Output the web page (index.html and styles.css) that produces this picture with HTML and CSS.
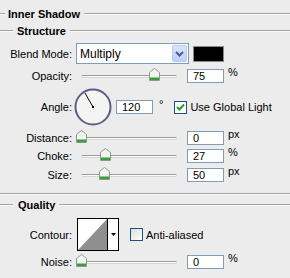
FILE: index.html
```html
<!DOCTYPE html>
<html lang="en">
<head>
  <meta charset="UTF-8">
  <title>Inner Shadow</title>
  <link rel="stylesheet" href="styles.css">
</head>
<body>

  <div class="legend legend-top">Inner Shadow</div>
  <div class="legend legend-sub">Structure</div>

  <!-- Blend mode -->
  <div class="row row-blend">
    <span class="lbl">Blend Mode:</span>
    <div class="select">
      <span class="select-text">Multiply</span>
      <span class="select-btn">
        <svg width="9" height="6" viewBox="0 0 9 6"><path d="M1 1 L4.5 4.5 L8 1" fill="none" stroke="#4d6185" stroke-width="2"/></svg>
      </span>
    </div>
    <div class="swatch"></div>
  </div>

  <!-- Opacity -->
  <div class="row row-field">
    <span class="lbl">Opacity:</span>
    <div class="slider">
      <div class="track"></div>
      <svg class="thumb" style="left: 73px" width="11" height="13" viewBox="0 0 11 13"><path d="M0.5 5 Q0.5 4 1.5 3.5 L5.5 0.5 L9.5 3.5 Q10.5 4 10.5 5 L10.5 12.5 L0.5 12.5 Z" fill="#f3f3f0" stroke="#8c9a8c"/><rect x="1" y="9.5" width="9" height="2.5" fill="#3c9c3c"/></svg>
    </div>
    <div class="input">75</div>
    <span class="unit">%</span>
  </div>

  <!-- Angle -->
  <div class="row row-angle">
    <span class="lbl">Angle:</span>
    <svg class="dial" width="38" height="38" viewBox="0 0 38 38">
      <circle cx="19" cy="19" r="17.5" fill="#f4f4f2" stroke="#5b5f86" stroke-width="2"/>
      <line x1="19" y1="19" x2="11" y2="5" stroke="#000" stroke-width="1"/>
      <rect x="18" y="18" width="2" height="2" fill="#000"/>
    </svg>
    <div class="input input-angle">120</div>
    <span class="unit unit-deg">°</span>
    <span class="check checked">
      <svg width="11" height="11" viewBox="0 0 11 11"><path d="M2 5 L4.5 7.5 L9 2.5" fill="none" stroke="#21a121" stroke-width="2"/></svg>
    </span>
    <span class="check-text">Use Global Light</span>
  </div>

  <!-- Distance / Choke / Size -->
  <div class="row row-field row-distance">
    <span class="lbl">Distance:</span>
    <div class="slider">
      <div class="track"></div>
      <svg class="thumb" style="left: 0px" width="11" height="13" viewBox="0 0 11 13"><path d="M0.5 5 Q0.5 4 1.5 3.5 L5.5 0.5 L9.5 3.5 Q10.5 4 10.5 5 L10.5 12.5 L0.5 12.5 Z" fill="#f3f3f0" stroke="#8c9a8c"/><rect x="1" y="9.5" width="9" height="2.5" fill="#3c9c3c"/></svg>
    </div>
    <div class="input">0</div>
    <span class="unit">px</span>
  </div>

  <div class="row row-field row-choke">
    <span class="lbl">Choke:</span>
    <div class="slider">
      <div class="track"></div>
      <svg class="thumb" style="left: 24px" width="11" height="13" viewBox="0 0 11 13"><path d="M0.5 5 Q0.5 4 1.5 3.5 L5.5 0.5 L9.5 3.5 Q10.5 4 10.5 5 L10.5 12.5 L0.5 12.5 Z" fill="#f3f3f0" stroke="#8c9a8c"/><rect x="1" y="9.5" width="9" height="2.5" fill="#3c9c3c"/></svg>
    </div>
    <div class="input">27</div>
    <span class="unit">%</span>
  </div>

  <div class="row row-field row-size">
    <span class="lbl">Size:</span>
    <div class="slider">
      <div class="track"></div>
      <svg class="thumb" style="left: 23px" width="11" height="13" viewBox="0 0 11 13"><path d="M0.5 5 Q0.5 4 1.5 3.5 L5.5 0.5 L9.5 3.5 Q10.5 4 10.5 5 L10.5 12.5 L0.5 12.5 Z" fill="#f3f3f0" stroke="#8c9a8c"/><rect x="1" y="9.5" width="9" height="2.5" fill="#3c9c3c"/></svg>
    </div>
    <div class="input">50</div>
    <span class="unit">px</span>
  </div>

  <div class="separator"></div>

  <div class="legend legend-sub legend-quality">Quality</div>

  <!-- Contour -->
  <div class="row row-contour">
    <span class="lbl">Contour:</span>
    <div class="contour">
      <svg class="contour-preview" width="29" height="31" viewBox="0 0 29 31"><path d="M0 31 L29 0 L29 31 Z" fill="#8f8f8f"/></svg>
      <span class="contour-btn">
        <svg width="5" height="3" viewBox="0 0 5 3"><path d="M0 0 L5 0 L2.5 3 Z" fill="#000"/></svg>
      </span>
    </div>
    <span class="check"></span>
    <span class="check-text">Anti-aliased</span>
  </div>

  <!-- Noise -->
  <div class="row row-field row-noise">
    <span class="lbl">Noise:</span>
    <div class="slider">
      <div class="track"></div>
      <svg class="thumb" style="left: 0px" width="11" height="13" viewBox="0 0 11 13"><path d="M0.5 5 Q0.5 4 1.5 3.5 L5.5 0.5 L9.5 3.5 Q10.5 4 10.5 5 L10.5 12.5 L0.5 12.5 Z" fill="#f3f3f0" stroke="#8c9a8c"/><rect x="1" y="9.5" width="9" height="2.5" fill="#3c9c3c"/></svg>
    </div>
    <div class="input">0</div>
    <span class="unit">%</span>
  </div>

</body>
</html>
```

FILE: styles.css
```css
body {
  margin: 0;
  padding: 6px 0 0;
  background: #ececec;
  font-family: "Liberation Sans", Arial, sans-serif;
  font-size: 11px;
  color: #000;
  width: 290px;
  height: 278px;
  overflow: hidden;
}

/* Group titles with etched lines */
.legend {
  display: flex;
  align-items: center;
  height: 16px;
  font-weight: bold;
}

.legend::before,
.legend::after {
  content: "";
  height: 0;
  border-top: 1px solid #a2a2a2;
  border-bottom: 1px solid #fbfbfb;
}

.legend::after {
  flex: 1;
  margin-left: 4px;
}

.legend-top::before {
  width: 5px;
  margin-right: 3px;
}

.legend-sub {
  margin-top: 1px;
}

.legend-sub::before {
  width: 13px;
  margin-right: 4px;
}

.legend-quality {
  margin-top: 2px;
}

.legend-quality::before {
  margin-right: 5px;
}

.separator {
  margin-top: 11px;
  height: 0;
  border-top: 1px solid #a2a2a2;
  border-bottom: 1px solid #fbfbfb;
}

/* Rows */
.row {
  display: flex;
  align-items: center;
}

.lbl {
  width: 72px;
  text-align: right;
  flex: none;
}

.row-blend {
  margin-top: 4px;
  height: 21px;
}

.row-field {
  margin-top: 5px;
  height: 14px;
}

.row-choke {
  margin-top: 4px;
}

.row-noise {
  margin-top: 4px;
}

/* Blend select */
.select {
  margin-left: 4px;
  width: 113px;
  height: 21px;
  box-sizing: border-box;
  border: 1px solid #7f9db9;
  background: #fff;
  display: flex;
  align-items: center;
  padding: 1px;
}

.select-text {
  flex: 1;
  padding-left: 2px;
  font-size: 12px;
}

.select-btn {
  width: 15px;
  height: 17px;
  box-sizing: border-box;
  border: 1px solid #b9c9ef;
  border-radius: 2px;
  background: linear-gradient(#d9e4fd, #bccff9);
  display: flex;
  align-items: center;
  justify-content: center;
}

.swatch {
  margin-left: 4px;
  width: 31px;
  height: 16px;
  box-sizing: border-box;
  border: 1px solid #8a8a8a;
  background: #000;
}

/* Sliders */
.slider {
  position: relative;
  margin-left: 4px;
  width: 106px;
  height: 14px;
  display: flex;
  align-items: center;
}

.track {
  margin: 1px 5px 0;
  flex: 1;
  height: 1px;
  border-top: 1px solid #9c9c9c;
  border-bottom: 1px solid #d9d5c9;
  background: #fbfbfb;
  border-radius: 2px;
}

.thumb {
  position: absolute;
  top: -1px;
}

.input {
  margin-left: 5px;
  width: 37px;
  height: 14px;
  box-sizing: border-box;
  border: 1px solid #7f9db9;
  background: #fff;
  padding-left: 5px;
  line-height: 12px;
  font-size: 11px;
}

.unit {
  margin-left: 4px;
  align-self: flex-start;
  margin-top: -3px;
}

/* Angle */
.row-angle {
  margin-top: 5px;
  height: 38px;
}

.dial {
  margin-left: 2px;
}

.input-angle {
  margin-left: 4px;
}

.unit-deg {
  margin-top: 10px;
  margin-left: 6px;
}

.check {
  width: 13px;
  height: 13px;
  box-sizing: border-box;
  border: 1px solid #1c5180;
  background: linear-gradient(135deg, #dcdcd7, #fff);
  display: flex;
  align-items: center;
  justify-content: center;
  margin-left: 11px;
}

.check.checked {
  background: #fff;
}

.check-text {
  margin-left: 3px;
}

/* Contour */
.row-contour {
  margin-top: 5px;
  height: 33px;
}

.contour {
  margin-left: 5px;
  width: 42px;
  height: 33px;
  box-sizing: border-box;
  border: 1px solid #000;
  background: #fff;
  display: flex;
}

.contour-btn {
  flex: 1;
  border-left: 1px solid #000;
  display: flex;
  align-items: center;
  justify-content: center;
}

.row-contour .check {
  margin-left: 11px;
}
```
